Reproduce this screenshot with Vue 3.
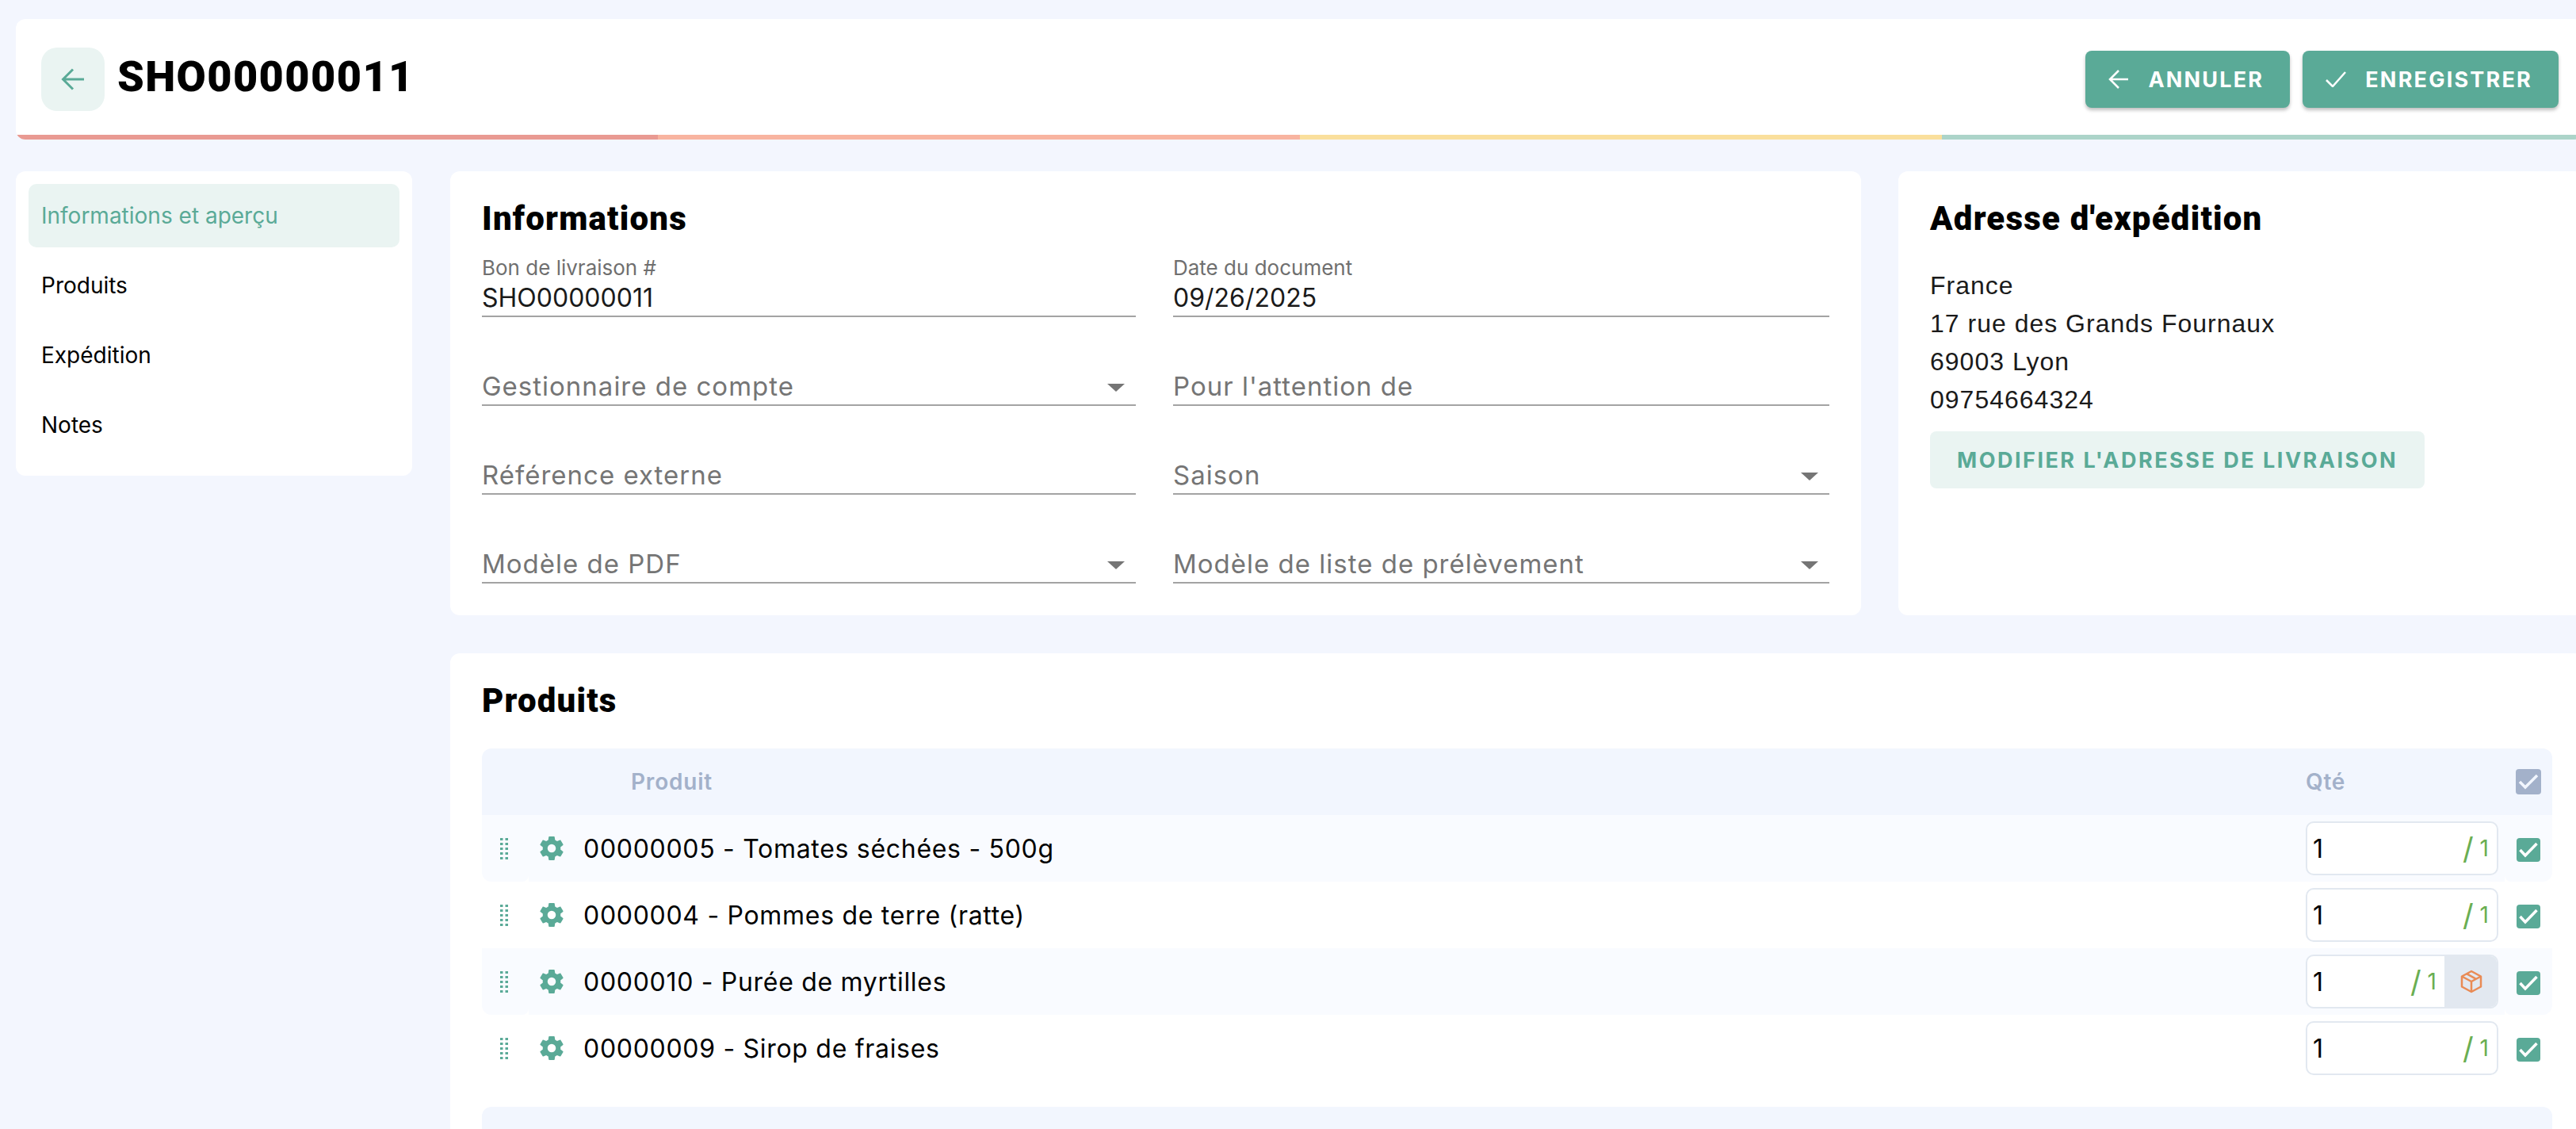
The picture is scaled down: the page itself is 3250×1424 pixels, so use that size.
<script setup>
const segments = ['#e99a92', '#f8b4a0', '#fadf9c', '#acd4c9']
const navItems = ['Informations et aperçu', 'Produits', 'Expédition', 'Notes']
const fields = [
  { label: 'Bon de livraison #', value: 'SHO00000011' },
  { label: 'Date du document', value: '09/26/2025' },
  { placeholder: 'Gestionnaire de compte', select: true },
  { placeholder: "Pour l'attention de" },
  { placeholder: 'Référence externe' },
  { placeholder: 'Saison', select: true },
  { placeholder: 'Modèle de PDF', select: true },
  { placeholder: 'Modèle de liste de prélèvement', select: true }
]
const addressLines = ['France', '17 rue des Grands Fournaux', '69003 Lyon', '09754664324']
const rows = [
  { name: '00000005 - Tomates séchées - 500g' },
  { name: '0000004 - Pommes de terre (ratte)' },
  { name: '0000010 - Purée de myrtilles', stock: true },
  { name: '00000009 - Sirop de fraises' }
]
const dots = []
for (let r = 0; r < 5; r++) for (let c = 0; c < 2; c++) dots.push({ x: c * 6.5, y: r * 6 })
const cog = 'M12,15.5A3.5,3.5 0 0,1 8.5,12A3.5,3.5 0 0,1 12,8.5A3.5,3.5 0 0,1 15.5,12A3.5,3.5 0 0,1 12,15.5M19.43,12.97C19.47,12.65 19.5,12.33 19.5,12C19.5,11.67 19.47,11.34 19.43,11L21.54,9.37C21.73,9.22 21.78,8.95 21.66,8.73L19.66,5.27C19.54,5.05 19.27,4.96 19.05,5.05L16.56,6.05C16.04,5.66 15.5,5.32 14.87,5.07L14.5,2.42C14.46,2.18 14.25,2 14,2H10C9.75,2 9.54,2.18 9.5,2.42L9.13,5.07C8.5,5.32 7.96,5.66 7.44,6.05L4.95,5.05C4.73,4.96 4.46,5.05 4.34,5.27L2.34,8.73C2.21,8.95 2.27,9.22 2.46,9.37L4.57,11C4.53,11.34 4.5,11.67 4.5,12C4.5,12.33 4.53,12.65 4.57,12.97L2.46,14.63C2.27,14.78 2.21,15.05 2.34,15.27L4.34,18.73C4.46,18.95 4.73,19.03 4.95,18.95L7.44,17.94C7.96,18.34 8.5,18.68 9.13,18.93L9.5,21.58C9.54,21.82 9.75,22 10,22H14C14.25,22 14.46,21.82 14.5,21.58L14.87,18.93C15.5,18.67 16.04,18.34 16.56,17.94L19.05,18.95C19.27,19.03 19.54,18.95 19.66,18.73L21.66,15.27C21.78,15.05 21.73,14.78 21.54,14.63L19.43,12.97Z'
</script>

<template>
  <div class="page">
    <header class="topbar">
      <div class="topbar-main">
        <button class="back">
          <svg width="30" height="28" viewBox="0 0 30 28" fill="none" stroke="#5aaa97" stroke-width="3">
            <path d="M29 14H3M15 1.5 2.5 14 15 26.500" />
          </svg>
        </button>
        <h1 class="doc-title">SHO00000011</h1>
        <div class="actions">
          <button class="primary">
            <svg width="26" height="24" viewBox="0 0 26 24" fill="none" stroke="#fff" stroke-width="2.500">
              <path d="M25 12H2M13 1 2 12 13 23" />
            </svg>
            <span>ANNULER</span>
          </button>
          <button class="primary">
            <svg width="26" height="20" viewBox="0 0 26 20" fill="none" stroke="#fff" stroke-width="2.500">
              <path d="M1 11 9 19 25 1" />
            </svg>
            <span>ENREGISTRER</span>
          </button>
        </div>
      </div>
      <div class="progress">
        <span v-for="color in segments" :key="color" class="segment" :style="{ background: color }"></span>
      </div>
    </header>

    <div class="layout">
      <nav class="sidebar">
        <a v-for="(item, i) in navItems" :key="item" class="nav-item" :class="{ active: i === 0 }">{{ item }}</a>
      </nav>

      <main class="content">
        <div class="top-cards">
          <section class="card info">
            <h2 class="card-title">Informations</h2>
            <div class="fields">
              <div v-for="f in fields" :key="f.label || f.placeholder" class="field">
                <label v-if="f.label" class="field-label">{{ f.label }}</label>
                <span v-if="f.value" class="field-value">{{ f.value }}</span>
                <span v-else class="field-placeholder">{{ f.placeholder }}</span>
                <i v-if="f.select" class="caret"></i>
              </div>
            </div>
          </section>

          <section class="card address">
            <h2 class="card-title">Adresse d'expédition</h2>
            <div class="address-lines">
              <div v-for="line in addressLines" :key="line">{{ line }}</div>
            </div>
            <button class="soft-btn">MODIFIER L'ADRESSE DE LIVRAISON</button>
          </section>
        </div>

        <section class="card products">
          <h2 class="card-title">Produits</h2>
          <div class="table">
            <div class="thead">
              <span class="th-product">Produit</span>
              <span class="th-qty">Qté</span>
              <span class="check head-check">
                <svg width="32" height="32" viewBox="0 0 32 32" fill="none" stroke="#f2f6fe" stroke-width="3.500">
                  <path d="M5 16 12 23 27 8" />
                </svg>
              </span>
            </div>
            <div v-for="(row, i) in rows" :key="row.name" class="row" :class="{ odd: i % 2 === 0 }">
              <div class="cell-drag">
                <svg width="10" height="28" viewBox="0 0 10 28" fill="#5aaa97">
                  <rect v-for="d in dots" :key="d.x + '-' + d.y" :x="d.x" :y="d.y + 1" width="3.500" height="3" />
                </svg>
              </div>
              <div class="cell-main">
                <svg class="cog" width="36" height="36" viewBox="0 0 24 24" fill="#5aaa97"><path :d="cog" /></svg>
                <span class="name">{{ row.name }}</span>
                <div class="qty">
                  <span class="qty-value">1</span>
                  <span class="qty-slash">/</span>
                  <span class="qty-max">1</span>
                  <span v-if="row.stock" class="qty-addon">
                    <svg width="28" height="30" viewBox="0 0 28 30" fill="none" stroke="#e98b55" stroke-width="2.500" stroke-linejoin="round">
                      <path d="M14 2 26 8.500V21.500L14 28 2 21.500V8.500Z" />
                      <path d="M2 8.500 14 15 26 8.500M14 15V28M8 5.200 20 11.800" />
                    </svg>
                  </span>
                </div>
              </div>
              <div class="cell-check">
                <span class="check">
                  <svg width="30" height="30" viewBox="0 0 30 30" fill="none" stroke="#fff" stroke-width="3.500">
                    <path d="M4.500 15 11 22 25.500 7" />
                  </svg>
                </span>
              </div>
            </div>
            <div class="tfoot"></div>
          </div>
        </section>
      </main>
    </div>
  </div>
</template>

<style scoped>
.page {
  width: 3260px;
  height: 1424px;
  overflow: hidden;
  box-sizing: border-box;
  padding: 24px 0 0 20px;
  background: #f3f6fe;
  font-family: Inter, "Noto Sans", sans-serif;
  color: #000;
}
button {
  border: 0;
  font: inherit;
  padding: 0;
}
.topbar {
  height: 152px;
  background: #fff;
  border-radius: 12px;
  overflow: hidden;
  display: flex;
  flex-direction: column;
}
.topbar-main {
  flex: 1;
  display: flex;
  align-items: center;
  padding: 6px 32px 0;
}
.back {
  width: 80px;
  height: 80px;
  border-radius: 20px;
  background: #eaf4f2;
  display: flex;
  align-items: center;
  justify-content: center;
}
.doc-title {
  margin: 0 0 6px 16px;
  font: 900 54px/1 Roboto, sans-serif;
  letter-spacing: 1.4px;
}
.actions {
  margin-left: auto;
  display: flex;
  gap: 16px;
}
.primary {
  height: 72px;
  padding: 0 33px 0 29px;
  display: flex;
  align-items: center;
  gap: 24px;
  background: #5aaa97;
  color: #fff;
  border-radius: 8px;
  font: 700 27px/1 Inter, sans-serif;
  letter-spacing: 2.2px;
  box-shadow: 0 3px 4px rgba(0, 0, 0, 0.25);
}
.progress {
  height: 6px;
  display: flex;
}
.segment {
  flex: 1;
}
.layout {
  display: flex;
  gap: 48px;
  margin-top: 40px;
  align-items: flex-start;
}
.sidebar {
  width: 500px;
  height: 384px;
  box-sizing: border-box;
  padding: 16px;
  background: #fff;
  border-radius: 12px;
  display: flex;
  flex-direction: column;
  gap: 8px;
  flex: none;
}
.nav-item {
  height: 80px;
  padding: 0 16px;
  display: flex;
  align-items: center;
  border-radius: 10px;
  font-size: 28px;
}
.nav-item.active {
  background: #eaf4f2;
  color: #5aaa97;
}
.content {
  width: 2692px;
  flex: none;
}
.top-cards {
  display: grid;
  grid-template-columns: 1780px 1fr;
  gap: 47px;
}
.card {
  background: #fff;
  border-radius: 12px;
  box-sizing: border-box;
  padding: 32px 40px 40px;
}
.card-title {
  margin: 0;
  font: 900 42px/56px Roboto, sans-serif;
  letter-spacing: 1.2px;
}
.fields {
  margin-top: 16px;
  display: grid;
  grid-template-columns: 825px 1fr;
  gap: 32px 47px;
}
.field {
  position: relative;
  height: 80px;
  box-sizing: border-box;
  border-bottom: 2px solid #a3a3a3;
  display: flex;
  flex-direction: column;
  justify-content: flex-end;
}
.field-label {
  font-size: 26px;
  line-height: 32px;
  color: #6f6f6f;
}
.field-value {
  font-size: 32px;
  line-height: 44px;
  color: #1a1a1a;
}
.field-placeholder {
  font-size: 33px;
  line-height: 46px;
  letter-spacing: 1px;
  color: #757575;
}
.caret {
  position: absolute;
  right: 14px;
  bottom: 16px;
  border-left: 11px solid transparent;
  border-right: 11px solid transparent;
  border-top: 10px solid #757575;
}
.address-lines {
  margin-top: 32px;
  font: 400 32px/48px "Liberation Sans", Arial, sans-serif;
  letter-spacing: 1px;
  color: #1a1a1a;
}
.soft-btn {
  display: block;
  margin-top: 16px;
  height: 72px;
  padding: 0 34px;
  background: #eaf4f2;
  color: #5aaa97;
  border-radius: 8px;
  font: 700 27px/1 Inter, sans-serif;
  letter-spacing: 2.5px;
}
.products {
  margin-top: 48px;
  padding-bottom: 0;
}
.table {
  margin-top: 32px;
}
.thead {
  height: 84px;
  display: flex;
  align-items: center;
  background: #f2f6fe;
  border-radius: 12px 12px 0 0;
  color: #a3b1ca;
  font-size: 28px;
  font-weight: 600;
  letter-spacing: 0.8px;
  padding-left: 188px;
  padding-right: 14px;
}
.th-qty {
  margin-left: auto;
  width: 265px;
}
.row {
  height: 84px;
  display: flex;
}
.cell-drag {
  width: 59px;
  flex: none;
  box-sizing: border-box;
  padding-left: 23px;
  display: flex;
  align-items: center;
  border-radius: 0 0 8px 12px;
}
.cell-main {
  flex: 1;
  display: flex;
  align-items: center;
  padding: 0 8px 0 11px;
}
.cell-check {
  width: 60px;
  flex: none;
  display: flex;
  align-items: center;
  justify-content: center;
  padding-top: 4px;
  box-sizing: border-box;
  border-radius: 0 0 12px 8px;
}
.odd .cell-drag,
.odd .cell-main,
.odd .cell-check {
  background: #f9fbff;
}
.cog {
  flex: none;
}
.name {
  margin-left: 22px;
  font-size: 32px;
  letter-spacing: 0.7px;
}
.qty {
  margin-left: auto;
  width: 243px;
  height: 68px;
  box-sizing: border-box;
  border: 2px solid #e2e8f0;
  border-radius: 10px;
  background: #fff;
  display: flex;
  align-items: center;
  padding-left: 7px;
  padding-right: 10px;
  overflow: hidden;
  font-size: 32px;
}
.qty-value {
  flex: 1;
}
.qty-slash {
  color: #6aae52;
  font-size: 38px;
  font-weight: 400;
  margin-right: 8px;
}
.qty-max {
  color: #6aae52;
  font-size: 28px;
}
.qty-addon {
  width: 68px;
  height: 68px;
  margin: 0 -12px 0 10px;
  background: #e2e8f0;
  display: flex;
  align-items: center;
  justify-content: center;
  flex: none;
}
.check {
  display: block;
  width: 30px;
  height: 30px;
  border-radius: 4px;
  background: #5aaa97;
}
.head-check {
  width: 32px;
  height: 32px;
  background: #a3b1ca;
}
.tfoot {
  margin-top: 32px;
  height: 84px;
  background: #f2f6fe;
  border-radius: 12px 12px 0 0;
}
</style>

<style>
html, body {
  margin: 0;
  overflow: hidden;
}
</style>
